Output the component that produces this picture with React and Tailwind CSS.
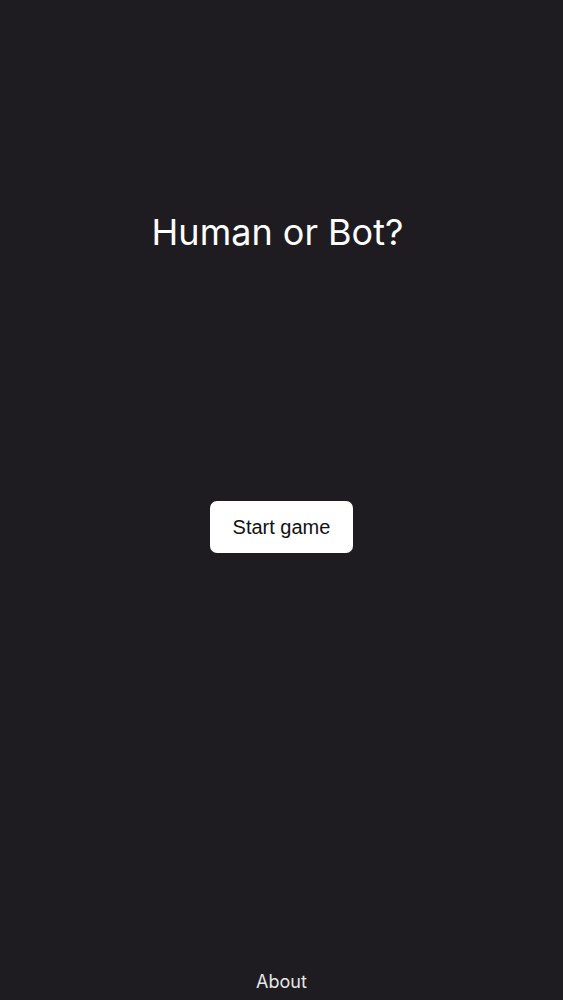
export default function App() {
  return (
    <div className="h-screen w-full bg-[#1e1c20] flex flex-col items-center font-['Inter',sans-serif] text-white">
      <h1 className="mt-[210px] mr-[8px] text-[36px] leading-[44px] font-normal">
        Human or Bot?
      </h1>
      <button className="mt-[247px] w-[143px] h-[52px] rounded-[7px] bg-white text-[#111] text-[20px] font-['Liberation_Sans',sans-serif]">
        Start game
      </button>
      <div className="flex-1" />
      <a className="mb-[7px] text-[18px] leading-[22px] text-[#e6e6e6]">About</a>
    </div>
  );
}
